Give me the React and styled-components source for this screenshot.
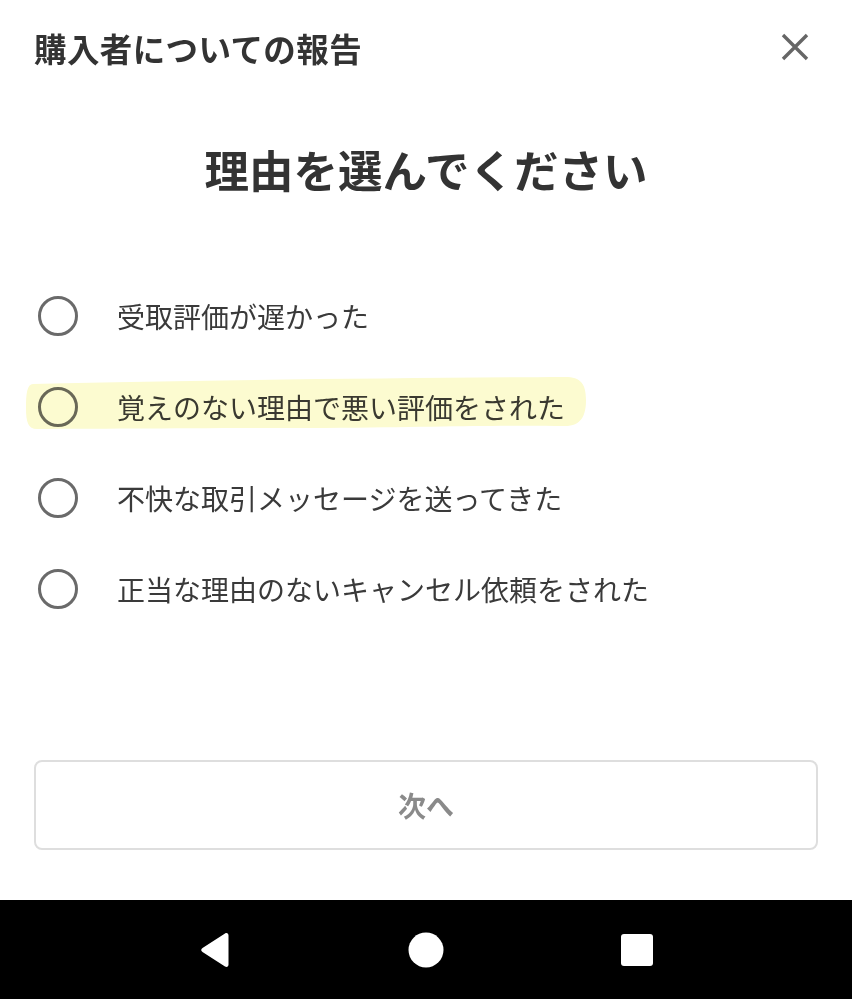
import styled, { createGlobalStyle } from "styled-components"

const Global = createGlobalStyle`
  body {
    margin: 0;
    background: #fff;
    font-family: "Noto Sans CJK JP", "Noto Sans", sans-serif;
  }
`

const Page = styled.div`
  min-height: 100vh;
  display: flex;
  flex-direction: column;
  background: #fff;
`

const Header = styled.header`
  height: 94px;
  padding: 0 42px 0 34px;
  display: flex;
  align-items: center;
  justify-content: space-between;
`

const HeaderTitle = styled.h1`
  margin: 0;
  font-size: 32.5px;
  font-weight: 700;
  color: #333;
  letter-spacing: 0.4px;
`

const CloseButton = styled.button`
  border: none;
  background: none;
  padding: 0;
  width: 30px;
  height: 30px;
  display: flex;
  cursor: pointer;
`

const Heading = styled.h2`
  margin: 44px 0 0;
  text-align: center;
  font-size: 44.5px;
  line-height: 62px;
  font-weight: 700;
  color: #333;
`

const OptionList = styled.ul`
  list-style: none;
  margin: 70px 0 0;
  padding: 0;
`

const Option = styled.li`
  position: relative;
  height: 91px;
  padding-left: 38px;
  display: flex;
  align-items: center;
  gap: 39px;
  cursor: pointer;
`

const Radio = styled.span`
  width: 40px;
  height: 40px;
  box-sizing: border-box;
  border: 3.5px solid #6a6a6a;
  border-radius: 50%;
  flex-shrink: 0;
`

const Label = styled.span`
  font-size: 28px;
  color: #3a3a3a;
`

const Marker = styled.svg`
  position: absolute;
  left: 25px;
  top: 15px;
  width: 562px;
  height: 56px;
  mix-blend-mode: multiply;
  pointer-events: none;
`

const NextButton = styled.button`
  margin: 126px 34px 0;
  height: 90px;
  border: 2px solid #dedede;
  border-radius: 8px;
  background: #fff;
  font-family: inherit;
  font-size: 28px;
  font-weight: 700;
  color: #8a8a8a;
`

const NavBar = styled.nav`
  margin-top: auto;
  height: 99px;
  background: #000;
  display: flex;
  align-items: center;
  justify-content: center;
  gap: 175px;
`

const NavIcon = styled.svg`
  width: 36px;
  height: 36px;
  fill: #fff;
`

const reasons = [
  "受取評価が遅かった",
  "覚えのない理由で悪い評価をされた",
  "不快な取引メッセージを送ってきた",
  "正当な理由のないキャンセル依頼をされた",
]

const App = () => {
  return (
    <Page>
      <Global />
      <Header>
        <HeaderTitle>購入者についての報告</HeaderTitle>
        <CloseButton aria-label="閉じる">
          <svg width="30" height="30" viewBox="0 0 30 30">
            <path d="M3 3 L27 27 M27 3 L3 27" stroke="#666" strokeWidth="3.4" />
          </svg>
        </CloseButton>
      </Header>
      <Heading>理由を選んでください</Heading>
      <OptionList>
        {reasons.map((r, i) => (
          <Option key={r}>
            {i === 1 && (
              <Marker viewBox="0 0 562 56" preserveAspectRatio="none">
                <path
                  d="M8 8 C120 5 360 2 540 1 C556 1 561 8 561 24 C561 40 556 50 540 50 C470 49 420 51 300 52 C180 52 80 53 12 53 C3 53 1 46 1 32 C1 18 2 8 8 8 Z"
                  fill="#fcfbd0"
                />
              </Marker>
            )}
            <Radio />
            <Label>{r}</Label>
          </Option>
        ))}
      </OptionList>
      <NextButton>次へ</NextButton>
      <NavBar>
        <NavIcon viewBox="0 0 36 36">
          <path d="M28 1.5 C30 0.5 31.5 1.5 31.5 3.5 L31.5 32.5 C31.5 34.5 30 35.5 28 34.5 L5.5 20 C3.8 19 3.8 17 5.5 16 Z" />
        </NavIcon>
        <NavIcon viewBox="0 0 36 36">
          <circle cx="18" cy="18" r="17.5" />
        </NavIcon>
        <NavIcon viewBox="0 0 36 36">
          <rect x="2" y="2" width="32" height="32" rx="3" />
        </NavIcon>
      </NavBar>
    </Page>
  )
}

export default App
